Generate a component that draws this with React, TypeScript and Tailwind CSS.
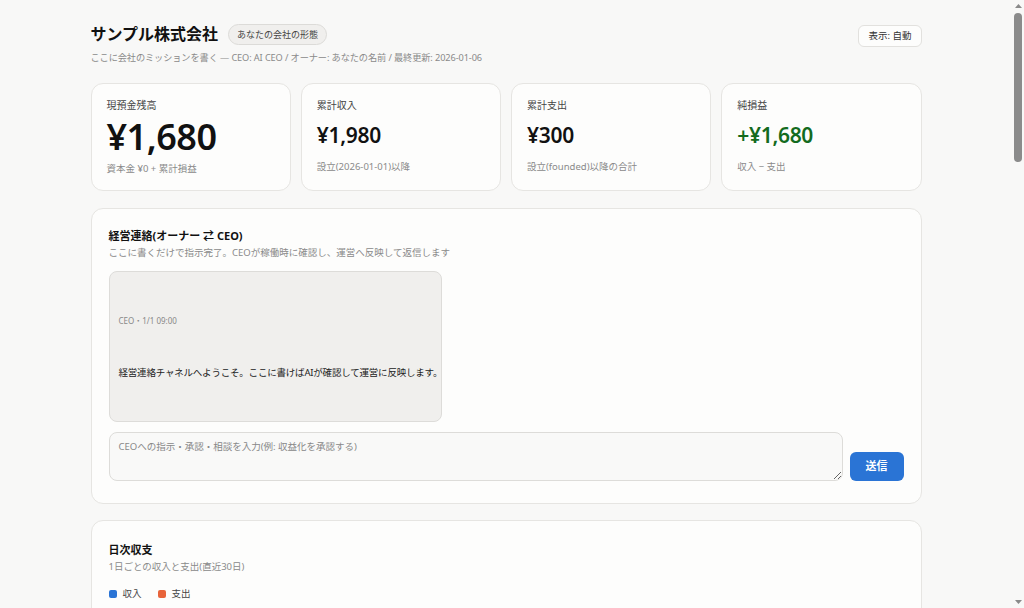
import React, { useState } from 'react';

const font = { fontFamily: '"Noto Sans", "Noto Sans CJK JP", sans-serif' };

const stats = [
  { label: '現預金残高', value: '¥1,680', note: '資本金 ¥0 + 累計損益', big: true },
  { label: '累計収入', value: '¥1,980', note: '設立(2026-01-01)以降' },
  { label: '累計支出', value: '¥300', note: '設立(founded)以降の合計' },
  { label: '純損益', value: '+¥1,680', note: '収入 − 支出', positive: true },
];

const StatCard = ({ s }: { s: (typeof stats)[number] }) => (
  <div className="rounded-xl border border-[#e6e5e2] bg-[#fdfdfc] px-[15px] pt-[14px] pb-[12px] h-[108px] flex flex-col">
    <div className="text-[10px] text-[#444] leading-[15px]">{s.label}</div>
    {s.big ? (
      <div className="text-[36px] font-semibold leading-[44px] mt-[2px] text-[#111] tracking-[-0.5px]">{s.value}</div>
    ) : (
      <div
        className={`text-[21px] font-semibold leading-[28px] mt-[8px] tracking-[-0.3px] ${
          s.positive ? 'text-[#136b1e]' : 'text-[#111]'
        }`}
      >
        {s.value}
      </div>
    )}
    <div className={`text-[9.5px] text-[#8a8a8a] leading-[14px] ${s.big ? 'mt-[3px]' : 'mt-[11px]'}`}>{s.note}</div>
  </div>
);

// window scrollbar as it appears in the capture
const ScrollBar = () => (
  <div className="w-[12px] h-screen shrink-0 bg-[#f8f8f7] flex flex-col items-center">
    <svg width="9" height="6" viewBox="0 0 9 6" className="mt-[3px]">
      <path d="M4.5 1 L8 5 L1 5 Z" fill="#8a8a8a" />
    </svg>
    <div className="mt-[4px] w-[8px] h-[149px] rounded-full bg-[#8b8b8b]" />
    <div className="flex-1" />
    <svg width="9" height="6" viewBox="0 0 9 6" className="mb-[3px]">
      <path d="M1 1 L8 1 L4.5 5 Z" fill="#8a8a8a" />
    </svg>
  </div>
);

export default function App() {
  const [msg, setMsg] = useState('');

  return (
    <div className="h-screen overflow-hidden w-full flex bg-[#f8f8f7] text-[#111]" style={font}>
      <main className="flex-1 min-w-0">
        <div className="max-w-[831px] mx-auto pt-[21px] pb-[40px]">
          <header className="flex items-start justify-between">
            <div>
              <div className="flex items-center gap-[10px]">
                <h1 className="text-[16px] font-bold leading-[26px]">サンプル株式会社</h1>
                <span className="rounded-full border border-[#dcdbd8] bg-[#f0efed] px-[8px] py-[3px] text-[9px] text-[#444] leading-[13px]">
                  あなたの会社の形態
                </span>
              </div>
              <p className="mt-[4px] text-[9.2px] text-[#8a8a8a] leading-[14px] tracking-[-0.1px]">
                ここに会社のミッションを書く — CEO: AI CEO / オーナー: あなたの名前 / 最終更新: 2026-01-06
              </p>
            </div>
            <button className="mt-[4px] rounded-md border border-[#e2e1de] bg-[#fdfdfc] px-[9px] py-[3px] text-[9.5px] text-[#333] leading-[14px]">
              表示: 自動
            </button>
          </header>

          <section className="mt-[18px] grid grid-cols-4 gap-[10px]">
            {stats.map((s) => (
              <StatCard key={s.label} s={s} />
            ))}
          </section>

          <section className="mt-[17px] rounded-xl border border-[#e6e5e2] bg-[#fdfdfc] px-[17px] pt-[18px] pb-[22px]">
            <h2 className="text-[11px] font-bold leading-[18px]">経営連絡(オーナー ⇄ CEO)</h2>
            <p className="mt-[1px] text-[9.5px] text-[#8a8a8a] leading-[14px]">
              ここに書くだけで指示完了。CEOが稼働時に確認し、運営へ反映して返信します
            </p>
            <div className="mt-[11px] w-[333px] h-[151px] rounded-lg border border-[#dddcd9] bg-[#f0efed] px-[9px] pt-[43px] flex flex-col">
              <div className="text-[8px] text-[#888] leading-[12px]">CEO・1/1 09:00</div>
              <div className="mt-[38px] text-[9.5px] text-[#222] leading-[16px] whitespace-nowrap tracking-[-0.2px]">
                経営連絡チャネルへようこそ。ここに書けばAIが確認して運営に反映します。
              </div>
            </div>
            <div className="mt-[10px] flex items-end gap-[7px]">
              <textarea
                value={msg}
                onChange={(e) => setMsg(e.target.value)}
                placeholder="CEOへの指示・承認・相談を入力(例: 収益化を承認する)"
                className="flex-1 h-[49px] rounded-lg border border-[#dddcd9] bg-[#f9f9f8] px-[9px] py-[7px] text-[9.5px] leading-[14px] placeholder:text-[#888] outline-none"
                style={font}
              />
              <button className="mb-[0px] w-[54px] h-[29px] rounded-md bg-[#2a74d5] text-white text-[11px] font-bold">
                送信
              </button>
            </div>
          </section>

          <section className="mt-[16px] rounded-xl border border-[#e6e5e2] bg-[#fdfdfc] px-[17px] pt-[20px] pb-[20px] h-[300px]">
            <h2 className="text-[11px] font-bold leading-[18px]">日次収支</h2>
            <p className="mt-[1px] text-[9.5px] text-[#8a8a8a] leading-[14px]">1日ごとの収入と支出(直近30日)</p>
            <div className="mt-[13px] flex items-center gap-[16px] text-[9.5px] text-[#444]">
              <span className="flex items-center gap-[6px]">
                <span className="w-[8px] h-[8px] rounded-[2px] bg-[#2a74d5]" />
                収入
              </span>
              <span className="flex items-center gap-[6px]">
                <span className="w-[8px] h-[8px] rounded-[2px] bg-[#e8643a]" />
                支出
              </span>
            </div>
          </section>
        </div>
      </main>
      <ScrollBar />
    </div>
  );
}
